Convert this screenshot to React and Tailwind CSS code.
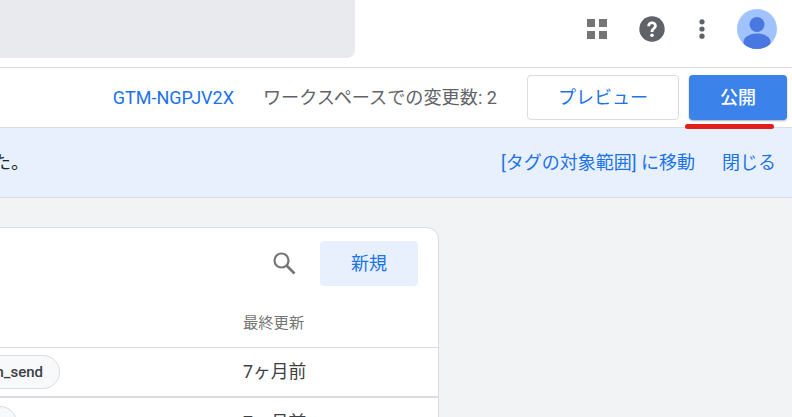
import React from "react";

const font = { fontFamily: '"Roboto","Noto Sans CJK JP",sans-serif' };

export default function App() {
  return (
    <div className="w-[792px] h-[417px] overflow-hidden bg-[#f1f3f4] flex flex-col" style={font}>
      {/* top bar */}
      <header className="h-[68px] shrink-0 bg-white border-b border-[#dadce0] flex items-start justify-between">
        <div className="w-[355px] h-[58px] bg-[#e8eaed] rounded-br-lg" />
        <div className="flex items-center h-[57px] pr-[15px]">
          <svg width="20" height="20" viewBox="0 0 20 20" className="mr-[32px] mt-[1px]" fill="#757575">
            <rect x="0" y="0" width="8" height="8" />
            <rect x="12" y="0" width="8" height="8" />
            <rect x="0" y="12" width="8" height="8" />
            <rect x="12" y="12" width="8" height="8" />
          </svg>
          <svg width="26" height="26" viewBox="0 0 26 26" className="mr-[34px]">
            <circle cx="13" cy="13" r="12.700" fill="#5f6368" />
            <path d="M8.300 10.200c0-2.800 2.100-4.700 4.800-4.700s4.700 1.800 4.700 4.300c0 3.200-3.400 3.500-3.400 6.200h-2.800c0-3.900 3.400-4.200 3.400-6.200 0-1.100-.8-1.900-1.900-1.900-1.200 0-2 .9-2 2.300z" fill="#fff" />
            <circle cx="13" cy="19.300" r="1.800" fill="#fff" />
          </svg>
          <svg width="6" height="22" viewBox="0 0 6 22" className="mr-[32px]" fill="#5f6368">
            <circle cx="3" cy="3.800" r="2.600" />
            <circle cx="3" cy="11" r="2.600" />
            <circle cx="3" cy="18.200" r="2.600" />
          </svg>
          <svg width="40" height="40" viewBox="0 0 40 40">
            <defs>
              <clipPath id="av"><circle cx="20" cy="20" r="20" /></clipPath>
            </defs>
            <circle cx="20" cy="20" r="20" fill="#a0c3ff" />
            <g clipPath="url(#av)" fill="#4978e0">
              <circle cx="20" cy="15.500" r="7.500" />
              <ellipse cx="20" cy="33" rx="13.500" ry="8.500" />
            </g>
          </svg>
        </div>
      </header>

      {/* container bar */}
      <div className="h-[60px] shrink-0 bg-white border-b border-[#dadce0] flex items-center justify-end relative">
        <span className="text-[18px] text-[#1a73e8] mr-[29px]">GTM-NGPJV2X</span>
        <span className="text-[18.150px] text-[#5f6368] mr-[30px]">ワークスペースでの変更数: 2</span>
        <button className="w-[152px] h-[45px] bg-white border border-[#dadce0] rounded text-[18px] text-[#1a73e8] mr-[10px]">プレビュー</button>
        <button className="w-[98px] h-[45px] bg-[#3b82ea] rounded text-[18px] font-medium text-white mr-[5px] shadow-[0_1px_2px_rgba(60,64,67,0.4)]">公開</button>
        <div className="absolute left-[685px] top-[56px] w-[89px] h-[5px] rounded-full bg-[#e31c1c]" />
      </div>

      {/* banner */}
      <div className="h-[70px] shrink-0 bg-[#e8f0fe] border-b border-[#dadce0] flex items-center justify-between pr-[16px]">
        <span className="text-[18px] text-[#202124] -ml-[7px]">た。</span>
        <div className="flex items-center gap-[27px] text-[18px] text-[#1a73e8]">
          <span>[タグの対象範囲] に移動</span>
          <span>閉じる</span>
        </div>
      </div>

      {/* card */}
      <div className="pt-[29px]">
        <div className="w-[440px] -ml-px h-[240px] bg-white border border-[#dadce0] rounded-tr-xl overflow-hidden">
          <div className="h-[71px] flex items-start justify-end pt-[13px] pr-[20px]">
            <svg width="24" height="24" viewBox="0 0 24 24" className="mr-[24px] mt-[10px]" fill="none" stroke="#757575">
              <circle cx="9.500" cy="9.500" r="7" strokeWidth="2.200" />
              <path d="M14.500 14.500 L22.500 22.500" strokeWidth="2.600" />
            </svg>
            <button className="w-[98px] h-[45px] bg-[#e8f0fe] rounded text-[18px] text-[#1a73e8]">新規</button>
          </div>
          <div className="h-[49px] border-b border-[#dadce0] flex items-center justify-end">
            <span className="w-[195px] text-[15.300px] text-[#757575]">最終更新</span>
          </div>
          <div className="h-[50px] border-b-2 border-[#dadce0] flex items-center">
            <div className="w-[60px] flex justify-end shrink-0">
              <span className="h-[34px] pl-[14px] pr-[16px] rounded-full border border-[#dadce0] bg-[#f8f9fa] text-[15px] font-medium text-[#3c4043] flex items-center shrink-0 whitespace-nowrap">gtm_send</span>
            </div>
            <span className="ml-[183px] text-[17.800px] text-[#3c4043]">7ヶ月前</span>
          </div>
          <div className="h-[50px] flex items-center">
            <div className="w-[17px] flex justify-end shrink-0">
              <span className="h-[34px] w-[60px] rounded-full border border-[#dadce0] bg-[#f8f9fa] shrink-0" />
            </div>
            <span className="ml-[226px] text-[17.800px] text-[#3c4043]">7ヶ月前</span>
          </div>
        </div>
      </div>
    </div>
  );
}
